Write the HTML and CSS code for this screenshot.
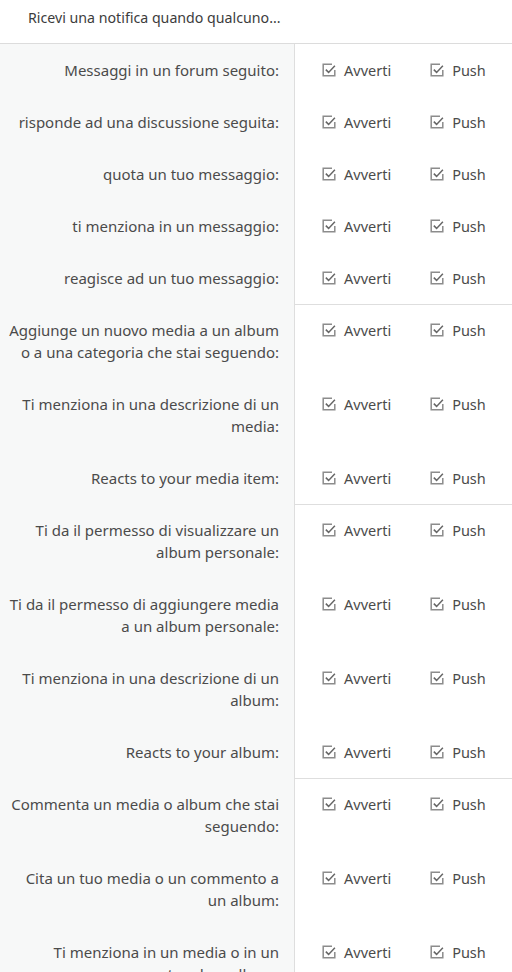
FILE: index.html
```html
<!DOCTYPE html>
<html lang="it">
<head>
  <meta charset="UTF-8">
  <meta name="viewport" content="width=device-width, initial-scale=1.0">
  <title>Preferenze notifiche</title>
  <link rel="stylesheet" href="styles.css">
</head>
<body>
  <div class="block">
    <h3 class="block-header">Ricevi una notifica quando qualcuno...</h3>

    <div class="group" id="groups"></div>
  </div>

  <script>
    // Gruppi di notifiche: ogni gruppo e' separato da una linea nella colonna destra
    const groups = [
      [
        'Messaggi in un forum seguito:',
        'risponde ad una discussione seguita:',
        'quota un tuo messaggio:',
        'ti menziona in un messaggio:',
        'reagisce ad un tuo messaggio:'
      ],
      [
        'Aggiunge un nuovo media a un album o a una categoria che stai seguendo:',
        'Ti menziona in una descrizione di un media:',
        'Reacts to your media item:'
      ],
      [
        'Ti da il permesso di visualizzare un album personale:',
        'Ti da il permesso di aggiungere media a un album personale:',
        'Ti menziona in una descrizione di un album:',
        'Reacts to your album:'
      ],
      [
        'Commenta un media o album che stai seguendo:',
        'Cita un tuo media o un commento a un album:',
        'Ti menziona in un media o in un commento ad un album:'
      ]
    ];

    const icon = '<svg class="check-icon" viewBox="0 0 14 14" width="14" height="14">' +
      '<path d="M10 1.2H1.2v11.6h11.6V7" fill="none" stroke="#8c8c8c" stroke-width="1.5"/>' +
      '<path d="M3.8 6.6l2.8 2.8L12.9 2.8" fill="none" stroke="#666" stroke-width="1.5"/>' +
      '</svg>';

    function option(text) {
      return '<label class="option">' + icon + '<span>' + text + '</span></label>';
    }

    const container = document.getElementById('groups');
    groups.forEach(function(rows, g) {
      rows.forEach(function(text, i) {
        const row = document.createElement('dl');
        row.className = 'pair' + (g > 0 && i === 0 ? ' pair-first' : '');
        row.innerHTML = '<dt>' + text + '</dt><dd>' + option('Avverti') + option('Push') + '</dd>';
        container.appendChild(row);
      });
    });
  </script>
</body>
</html>
```

FILE: styles.css
```css
body {
  margin: 0;
  background-color: #fff;
  font-family: "Noto Sans", "Open Sans", sans-serif;
  color: #4b4b4b;
}

.block {
  width: 512px;
}

.block-header {
  margin: 0;
  padding: 9px 28px 0 28px;
  height: 34px;
  font-size: 14.2px;
  font-weight: normal;
  line-height: 18px;
  color: #3c3c3c;
  border-bottom: 1px solid #dcdcdc;
}

.pair {
  display: grid;
  grid-template-columns: 294px 1fr;
  margin: 0;
}

.pair dt {
  background-color: #f7f8f8;
  padding: 15px 15px 15px 6px;
  text-align: right;
  font-size: 15px;
  line-height: 22px;
}

.pair dd {
  margin: 0;
  border-left: 1px solid #dedede;
  padding: 15px 0 15px 27px;
  display: flex;
  align-items: flex-start;
  gap: 39px;
}

.pair-first dd {
  border-top: 1px solid #dedede;
  padding-top: 14px;
}

.option {
  display: flex;
  align-items: center;
  gap: 8px;
  font-size: 14.5px;
  line-height: 22px;
}

.check-icon {
  display: block;
}
```
